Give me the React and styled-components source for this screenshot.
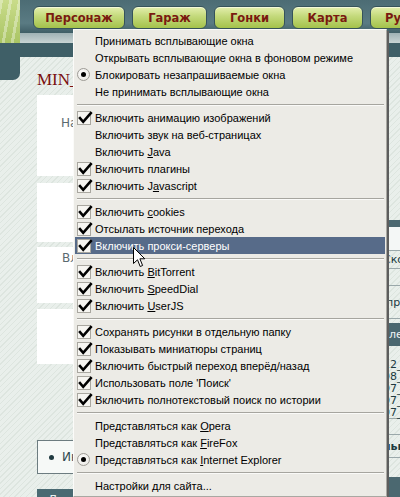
import React from "react";
import styled, { createGlobalStyle } from "styled-components";

const Global = createGlobalStyle`
  html, body { margin: 0; padding: 0; background: #42626a; }
  #root { width: 400px; height: 497px; }
`;

const Screen = styled.div`
  position: relative;
  width: 400px;
  height: 497px;
  overflow: hidden;
  display: flex;
  flex-direction: column;
  background: #42626a;
  font-family: "DejaVu Sans", "Liberation Sans", sans-serif;
`;

/* ---------- page behind the menu ---------- */
const Header = styled.div`
  display: flex;
  height: 43px;
  flex: none;
`;
const Bamboo = styled.div`
  width: 20px;
  flex: none;
  background:
    repeating-linear-gradient(100deg, rgba(255,255,255,0.35) 0 3px, transparent 3px 9px),
    linear-gradient(180deg, #c9dc8a, #a9c463);
`;
const HeaderMain = styled.div`
  flex: 1;
  min-width: 0;
  display: flex;
  flex-direction: column;
`;
const NavRow = styled.div`
  height: 33px;
  display: flex;
  gap: 7px;
  overflow: hidden;
  padding: 6px 0 0 13px;
  box-sizing: border-box;
  background: linear-gradient(180deg, #4c6c74, #5a7b83 70%, #3f5e66);
`;
const NavButton = styled.div`
  flex: none;
  width: ${(p) => p.w}px;
  height: 23px;
  box-sizing: border-box;
  border: 1px solid #36535a;
  border-radius: 6px;
  background: linear-gradient(180deg, #e4efae 0%, #c3d97a 45%, #a4c24b 100%);
  box-shadow: inset 0 1px 0 #f4f9d8;
  display: flex;
  align-items: center;
  justify-content: ${(p) => (p.cut ? "flex-start" : "center")};
  padding-left: ${(p) => (p.cut ? 14 : 0)}px;
  font: bold 11.5px "DejaVu Sans", "Liberation Sans", sans-serif;
  color: #7a1a10;
  white-space: nowrap;
`;
const LightBand = styled.div`
  flex: 1;
  background: linear-gradient(180deg, #9fb2b5, #c9d4d4);
`;
const DarkBand = styled.div`
  height: 14px;
  flex: none;
  background: #3f5f67;
`;
const Body = styled.div`
  flex: 1;
  min-height: 0;
  display: flex;
  background:
    repeating-linear-gradient(-45deg, #dde5df 0 1px, #e9efeb 1px 4px);
`;
const LeftStrip = styled.div`
  width: 20px;
  flex: none;
`;
const LeftTab = styled.div`
  height: 23px;
  background: #3f5f67;
  border-bottom-right-radius: 7px;
`;
const Content = styled.div`
  flex: 1;
  min-width: 0;
  display: flex;
  border-top-left-radius: 8px;
  padding-left: 17px;
`;
const LeftCol = styled.div`
  width: 290px;
  flex: none;
  display: flex;
  flex-direction: column;
`;
const Title = styled.div`
  height: 38px;
  flex: none;
  display: flex;
  align-items: flex-end;
  padding-bottom: 5px;
  box-sizing: border-box;
  font: 17px "Liberation Serif", serif;
  color: #7a1010;
`;
const WhiteBox = styled.div`
  height: ${(p) => p.h}px;
  flex: none;
  margin-top: ${(p) => p.mt || 0}px;
  background: #ffffff;
  padding: ${(p) => p.pt || 0}px 0 0 ${(p) => p.pl || 0}px;
  box-sizing: border-box;
  font-size: 12px;
  color: #5a6a70;
`;
const FramedBox = styled.div`
  height: 34px;
  flex: none;
  margin-top: 76px;
  box-sizing: border-box;
  border: 1px solid #6c7c80;
  background: #f6f9f7;
  display: flex;
  align-items: center;
  gap: 8px;
  padding-left: 11px;
  font-size: 12px;
  color: #2f4a50;
`;
const Dot = styled.span`
  width: 5px;
  height: 5px;
  border-radius: 50%;
  background: #1f3a40;
`;
const DarkTab = styled.div`
  height: 20px;
  flex: none;
  margin-top: 15px;
  background: #4a6a72;
  color: #e8f0f0;
  font-size: 12px;
  padding: 4px 0 0 11px;
`;
const RightCol = styled.div`
  flex: 1;
  display: flex;
  flex-direction: column;
  padding-top: 163px;
  font-size: 11px;
  color: #203a40;
`;
const RBand = styled.div`
  height: ${(p) => p.h}px;
  flex: none;
  background: #4b6870;
  color: #f0f4f4;
  padding-left: 56px;
  display: flex;
  align-items: center;
`;
const RRow = styled.div`
  height: ${(p) => p.h}px;
  flex: none;
  background: ${(p) => p.bg || "transparent"};
  border-bottom: ${(p) => (p.line ? "1px solid #9aa8aa" : "none")};
  display: flex;
  align-items: center;
  padding-left: 56px;
  font-weight: ${(p) => (p.bold ? "bold" : "normal")};
  white-space: nowrap;
`;

/* ---------- popup menu ---------- */
const Menu = styled.div`
  position: absolute;
  left: 73px;
  top: 29px;
  width: 314px;
  box-sizing: border-box;
  background: #ecebe6;
  border: 1px solid #a9a8a2;
  border-top-color: #fbfbf9;
  border-left-color: #fbfbf9;
  box-shadow: 2px 2px 0 #5d5d5d;
  padding: 2px 1px;
  display: flex;
  flex-direction: column;
  font-family: "Liberation Sans", Arial, sans-serif;
  font-size: 11px;
`;
const Item = styled.div`
  height: 17px;
  display: flex;
  align-items: center;
  background: ${(p) => (p.active ? "#576b89" : "transparent")};
  color: ${(p) => (p.active ? "#ffffff" : "#000000")};
  white-space: nowrap;
`;
const Label = styled.span`
  white-space: pre;
`;
const IconCell = styled.div`
  width: 20px;
  height: 17px;
  flex: none;
  display: flex;
  align-items: center;
  padding-left: 2px;
  box-sizing: border-box;
`;
const CheckBox = styled.div`
  width: 14px;
  height: 14px;
  box-sizing: border-box;
  border: 1px solid #a9a7a0;
  background: #f6f5f1;
  position: relative;
`;
const CheckSvg = styled.svg`
  position: absolute;
  left: -1px;
  top: -2px;
`;
const Radio = styled.div`
  width: 13px;
  height: 13px;
  box-sizing: border-box;
  border-radius: 50%;
  border: 1px solid #9e9c96;
  background: radial-gradient(circle at 40% 40%, #ffffff, #e4e2dc);
  display: flex;
  align-items: center;
  justify-content: center;
  &::after {
    content: "";
    width: 5px;
    height: 5px;
    border-radius: 50%;
    background: #000;
  }
`;
const Separator = styled.div`
  height: 9px;
  display: flex;
  align-items: center;
  padding: 0 1px 0 2px;
  &::after {
    content: "";
    flex: 1;
    height: 1px;
    background: #a6a59f;
    box-shadow: 0 1px 0 #fafaf8;
  }
`;
const Key = styled.span`
  text-decoration: underline;
`;
const Cursor = styled.svg`
  position: absolute;
  left: 133px;
  top: 247px;
`;

const Check = () => (
  <CheckBox>
    <CheckSvg width="16" height="16" viewBox="0 0 16 16">
      <path d="M3 8.2 L6.2 11.8 L13.8 3.2" fill="none" stroke="#000" strokeWidth="2.6" strokeLinecap="square" />
    </CheckSvg>
  </CheckBox>
);

const L = (pre, key, post) => (
  <>
    {pre}
    <Key>{key}</Key>
    {post}
  </>
);

const groups = [
  [
    { t: "Принимать всплывающие окна" },
    { t: "Открывать всплывающие окна в фоновом режиме" },
    { t: "Блокировать незапрашиваемые окна", r: true },
    { t: "Не принимать всплывающие окна" },
  ],
  [
    { t: "Включить анимацию изображений", c: true },
    { t: "Включить звук на веб-страницах" },
    { t: L("Включить ", "J", "ava") },
    { t: "Включить плагины", c: true },
    { t: L("Включить J", "a", "vascript"), c: true },
  ],
  [
    { t: L("Включить ", "c", "ookies"), c: true },
    { t: "Отсылать источник перехода", c: true },
    { t: "Включить прокси-серверы", c: true, active: true },
  ],
  [
    { t: L("Включить ", "B", "itTorrent"), c: true },
    { t: L("Включить ", "S", "peedDial"), c: true },
    { t: L("Включить ", "U", "serJS"), c: true },
  ],
  [
    { t: "Сохранять рисунки в отдельную папку", c: true },
    { t: "Показывать миниатюры страниц", c: true },
    { t: "Включить быстрый переход вперёд/назад", c: true },
    { t: "Использовать поле 'Поиск'", c: true },
    { t: "Включить полнотекстовый поиск по истории", c: true },
  ],
  [
    { t: L("Представляться как ", "O", "pera") },
    { t: L("Представляться как ", "F", "ireFox") },
    { t: L("Представляться как ", "I", "nternet Explorer"), r: true },
  ],
  [{ t: "Настройки для сайта..." }],
];

export default function App() {
  return (
    <Screen>
      <Global />
      <Header>
        <Bamboo />
        <HeaderMain>
          <NavRow>
            <NavButton w={92}>Персонаж</NavButton>
            <NavButton w={75}>Гараж</NavButton>
            <NavButton w={71}>Гонки</NavButton>
            <NavButton w={71}>Карта</NavButton>
            <NavButton w={70} cut>Рули</NavButton>
          </NavRow>
          <LightBand />
        </HeaderMain>
      </Header>
      <DarkBand />
      <Body>
        <LeftStrip>
          <LeftTab />
        </LeftStrip>
        <Content>
          <LeftCol>
            <Title>MIN_</Title>
            <WhiteBox h={81} pt={21} pl={24}>Награды</WhiteBox>
            <WhiteBox h={59} mt={7} />
            <WhiteBox h={56} mt={5} pt={4} pl={25}>Владелец</WhiteBox>
            <WhiteBox h={55} mt={6} />
            <FramedBox>
              <Dot />
              Информация
            </FramedBox>
            <DarkTab>Друзья</DarkTab>
          </LeftCol>
          <RightCol>
            <RBand h={7} />
            <RRow h={23} bg="#f4f7f6" line />
            <RRow h={17} line>Скорость</RRow>
            <RRow h={16} line>-</RRow>
            <RRow h={32} line>'пр</RRow>
            <RRow h={4} />
            <RBand h={23}>след</RBand>
            <RRow h={12} />
            <RRow h={12}>12_</RRow>
            <RRow h={12}>08_</RRow>
            <RRow h={12}>07_</RRow>
            <RRow h={12}>07_</RRow>
            <RRow h={12} line>07_</RRow>
            <RRow h={15} line />
            <RRow h={22} bold line>ньюс</RRow>
            <RRow h={19} />
            <RBand h={20} />
          </RightCol>
        </Content>
      </Body>

      <Menu>
        {groups.map((g, gi) => (
          <React.Fragment key={gi}>
            {gi > 0 && <Separator />}
            {g.map((it, i) => (
              <Item key={i} active={it.active}>
                <IconCell>{it.c ? <Check /> : it.r ? <Radio /> : null}</IconCell>
                <Label>{it.t}</Label>
              </Item>
            ))}
          </React.Fragment>
        ))}
      </Menu>

      <Cursor width="13" height="21" viewBox="0 0 13 21">
        <path d="M0.5 0.5 L0.5 16.5 L4.5 12.8 L7.2 19.5 L9.6 18.5 L6.9 11.8 L11.8 11.8 Z" fill="#fff" stroke="#000" strokeWidth="1" />
      </Cursor>
    </Screen>
  );
}
